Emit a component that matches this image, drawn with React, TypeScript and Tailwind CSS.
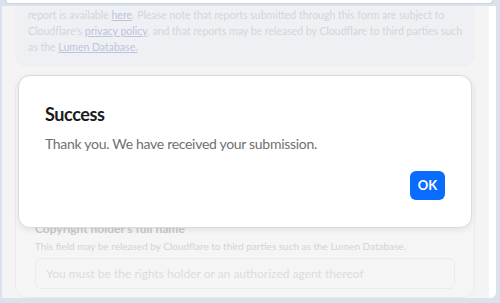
const font = { fontFamily: 'Lato, "Noto Sans", sans-serif' };

const App = () => {
    return (
        <div
            className="relative w-[500px] h-[303px] overflow-hidden bg-[#dae3ed] flex"
            style={font}
        >
            <div className="w-[2px] h-full bg-[#44536a]" />
            <div className="flex-1 flex flex-col pl-[2px] pr-[7px]">
                <div className="h-[4px] mx-[3px] rounded-b-lg bg-white border-x border-b border-[#c9d4e0]" />
                <div className="flex-1 flex mt-[2px] mb-[5px] bg-[#f4f4f4] rounded-br-md overflow-hidden">
                    <div className="flex-1 flex flex-col pl-[13px] pr-[14px]">
                        <div className="bg-[#eff0f3] rounded-b-xl px-[13px] pt-[1px] pb-[12px] text-[10.5px] leading-[16px] text-[#d2d5da] whitespace-nowrap">
                            <p>
                                report is available{' '}
                                <span className="underline text-[#bcc5df]">here</span>. Please note
                                that reports submitted through this form are subject to
                                <br />
                                Cloudflare's{' '}
                                <span className="underline text-[#bcc5df]">privacy policy</span>, and
                                that reports may be released by Cloudflare to third parties such
                                <br />
                                as the{' '}
                                <span className="underline text-[#bcc5df]">Lumen Database.</span>
                            </p>
                        </div>
                        <div className="mt-[11px] flex-1 bg-[#f5f5f6] border border-[#ececec] rounded-xl px-[19px] pt-[142px] whitespace-nowrap">
                            <div className="text-[12px] leading-[15px] font-bold text-[#c9c9c9]">
                                Copyright holder's full name
                            </div>
                            <div className="mt-[3px] text-[10px] leading-[14px] text-[#d3d3d3]">
                                This field may be released by Cloudflare to third parties such as the
                                Lumen Database.
                            </div>
                            <div className="mt-[5px] h-[31px] border border-[#ebebeb] rounded-md px-[10px] flex items-center text-[12px] text-[#dcdcdc]">
                                You must be the rights holder or an authorized agent thereof
                            </div>
                        </div>
                    </div>
                    <div className="w-[7px] bg-white" />
                </div>
            </div>

            <div className="absolute left-[18px] top-[75px] w-[454px] h-[153px] bg-white rounded-xl border border-[#dadada] shadow-[0_2px_6px_rgba(0,0,0,0.08)] px-[26px] pt-[26px] flex flex-col">
                <h2 className="text-[18px] leading-[24px] font-bold tracking-[-0.4px] text-[#1b1b1b]">
                    Success
                </h2>
                <p className="mt-[8px] text-[14px] leading-[20px] tracking-[-0.3px] text-[#707070]">
                    Thank you. We have received your submission.
                </p>
                <div className="mt-[17px] flex justify-end">
                    <button className="w-[35px] h-[29px] rounded-md bg-[#0a6cff] text-white text-[13px] font-bold">
                        OK
                    </button>
                </div>
            </div>
        </div>
    );
};

export default App;
